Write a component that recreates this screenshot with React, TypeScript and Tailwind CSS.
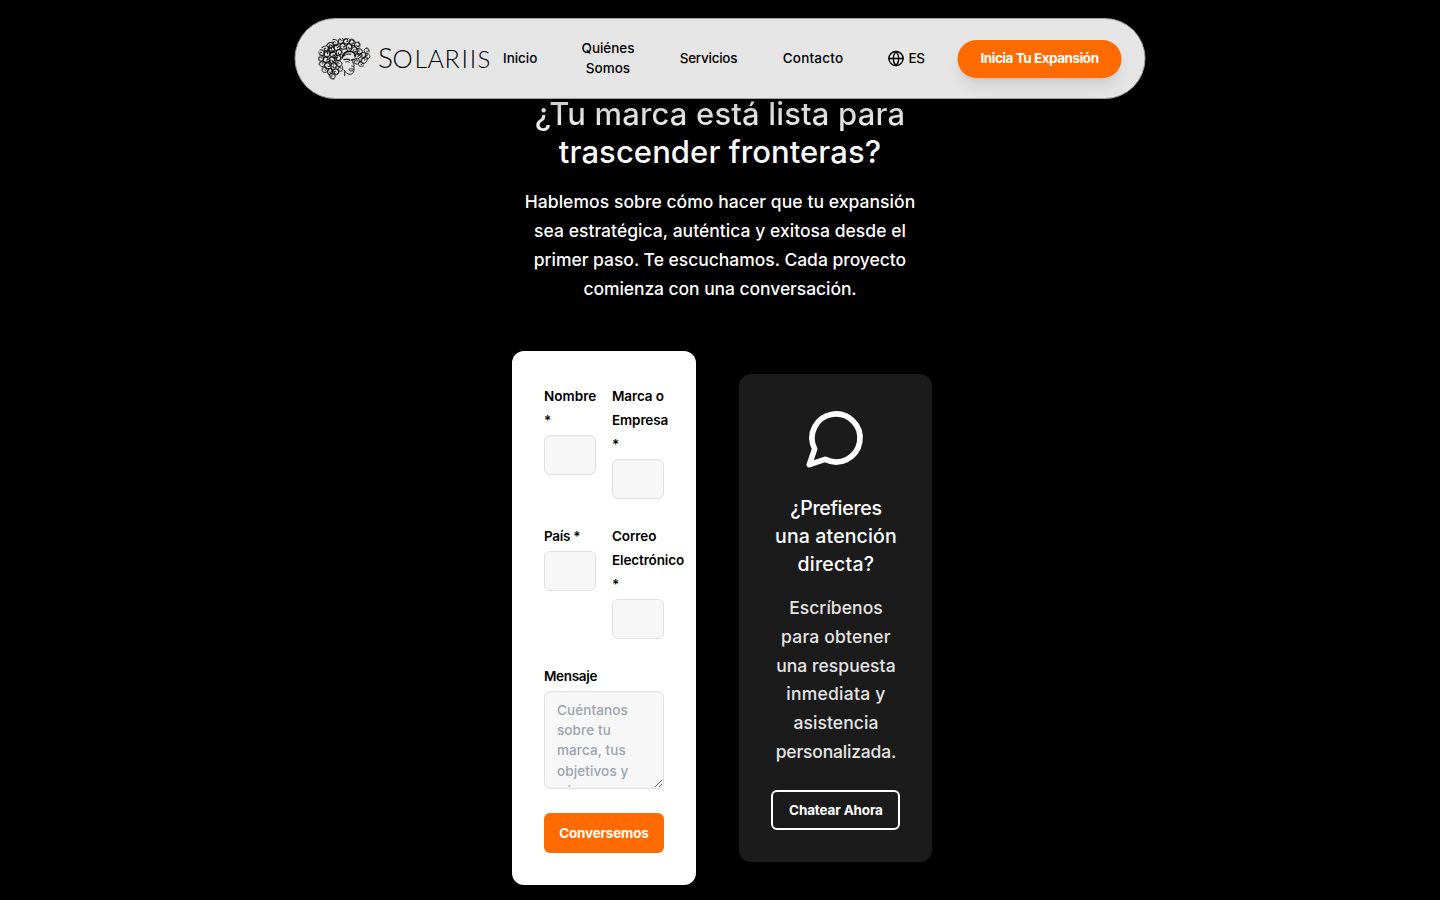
import type { ReactNode } from "react";

type LineProps = { children: ReactNode; className?: string };

function Line({ children, className = "" }: LineProps) {
  return <span className={`block whitespace-nowrap ${className}`}>{children}</span>;
}

const curls: [number, number, number, number][] = [
  [13, 7, 2.6, 20], [18, 4.5, 2.6, 80], [23.5, 3.2, 2.5, 140], [29, 3.4, 2.6, 200], [34.5, 4.6, 2.7, 250], [39.5, 7, 2.6, 300],
  [8.5, 10.5, 2.7, 40], [14, 11.5, 3, 110], [19.5, 9.5, 2.8, 190], [25.5, 8.4, 2.9, 230], [31.5, 9, 2.9, 310], [37, 11.5, 2.6, 10],
  [4.5, 15, 2.5, 90], [9.5, 16, 2.9, 160], [15.5, 16.5, 3, 250], [21.3, 14.5, 2.8, 320], [42, 13.5, 2.7, 60],
  [3.8, 20.5, 2.4, 130], [8.8, 21.8, 2.9, 210], [14.6, 22, 2.9, 280], [20.3, 20, 2.7, 30], [40, 18.5, 2.4, 200],
  [4.8, 26, 2.5, 180], [10.2, 27.6, 2.9, 250], [16, 27.8, 2.9, 320], [21.6, 25.6, 2.6, 90], [39.5, 23.5, 2.4, 140],
  [7.3, 32, 2.5, 220], [12.6, 33.6, 2.7, 300], [18.2, 33.6, 2.7, 30], [23, 31, 2.2, 150], [15, 38.2, 2.4, 60],
  [45.5, 17, 2.6, 20], [49, 12.8, 2.3, 280], [50.2, 18, 2.2, 90], [46.6, 22.6, 2.6, 170], [43.2, 26.2, 2.2, 240],
];

function Medusa() {
  return (
    <svg className="mt-px h-[42px] w-[54px] shrink-0" viewBox="0 0 54 42" fill="none" stroke="#0a0a0a" strokeLinecap="round">
      {curls.map(([x, y, r, a], i) => (
        <g key={i} transform={`translate(${x} ${y}) rotate(${a}) scale(${r / 3})`}>
          <path strokeWidth="1.05" d="M-4 2.2C-3.4-2.6 0-4 2-2.6 4.4-.7 2.8 2.8.2 2.6-1.6 2.4-1.6.4-.4 0" />
          <path strokeWidth="0.6" d="M-2.4 3.4C0 4.8 4.2 3.2 4.2-.6" />
        </g>
      ))}
      <path strokeWidth="1.7" d="M24.6 20c1.2-4.6 4-7 8.4-6.5 2.4.2 4.2 1.7 4.9 4.2" />
      <path strokeWidth="1" d="M26.5 18c2-1.8 4-2.4 6.8-1.8" />
      <path strokeWidth="1.3" d="M26.5 21.6c2.4-.8 4.2-.6 5.8.5M34 22c1-.7 2-.8 2.8-.6" />
      <path strokeWidth="0.9" d="M28.3 23.8c1.2-.5 2.4-.3 3.2.2M34.6 22.4c.5 2 1.6 3.6 2.1 5.2-.6.7-1.6.8-2.5.5M31.5 31.2c1.6-.6 3.1-.5 4.4-.1M32.2 32.7c1 .5 2 .5 3 0M36.4 28.6c.2 1.6.2 3 0 4.1-.5 2.2-1.9 3.7-4 3.6-2.6-.3-4.6-2-6-4.3M27 33.6c.2 1.7.5 3 .2 4.1" />
    </svg>
  );
}

function Logo() {
  return (
    <div className="flex w-[174px] shrink-0 items-center">
      <Medusa />
      <div className="mb-[3px] ml-[7px] flex h-[28px] items-baseline font-['Lato'] text-[25px] leading-[28px] font-light text-black">
        <span className="w-[14.5px] text-[28px]">S</span>
        <span className="w-[22px] text-[25.5px]">O</span>
        <span className="w-[13px]">L</span>
        <span className="w-[17px]">A</span>
        <span className="w-[17px]">R</span>
        <span className="w-[8.3px]">I</span>
        <span className="w-[7.7px]">I</span>
        <span className="w-[12px] text-[24px]">S</span>
      </div>
    </div>
  );
}

function Globe() {
  return (
    <svg className="size-[17px]" viewBox="0 0 24 24" fill="none" stroke="currentColor" strokeWidth="2" strokeLinecap="round" strokeLinejoin="round">
      <circle cx="12" cy="12" r="10" />
      <path d="M12 2a14.5 14.5 0 0 0 0 20 14.5 14.5 0 0 0 0-20M2 12h20" />
    </svg>
  );
}

function Header() {
  return (
    <header className="absolute top-[18px] left-1/2 z-10 flex h-[81px] w-[851px] -translate-x-1/2 items-center rounded-full border border-[#a3a3a3] bg-[#e5e5e5] pb-px pl-[21.5px] text-[13.5px] leading-5 font-[450] text-black shadow-2xl">
      <Logo />
      <nav className="ml-[12px] flex items-center text-center">
        <Line className="w-[34px] tracking-[-0.05px]">Inicio</Line>
        <div className="ml-[44.5px] w-[53px]">
          <Line className="tracking-[-0.05px]">Quiénes</Line>
          <Line>Somos</Line>
        </div>
        <Line className="ml-[45px] w-[58px] tracking-[-0.25px]">Servicios</Line>
        <Line className="ml-[45px] w-[61px] tracking-[0.2px]">Contacto</Line>
      </nav>
      <div className="ml-[44px] flex items-center gap-[4px]">
        <Globe />
        <Line className="w-[16px] tracking-[-0.5px]">ES</Line>
      </div>
      <button className="mt-px ml-[33px] h-[38px] w-[164px] rounded-full bg-[#ff6b00] pb-px font-bold whitespace-nowrap tracking-[-0.46px] text-white shadow-lg">
        Inicia Tu Expansión
      </button>
    </header>
  );
}

function Field({ children }: { children: ReactNode }) {
  return (
    <div>
      <label className="block pt-px">{children}</label>
      <input className="mt-[3px] block h-10 w-full rounded-md border border-[#e0e0e0] bg-[#f7f7f7]" />
    </div>
  );
}

function ContactForm() {
  return (
    <form className="h-[534px] w-[184px] rounded-xl bg-white p-8 text-[13.5px] leading-6 font-semibold text-black">
      <div className="grid grid-cols-2 gap-x-4 gap-y-6">
        <Field>
          <Line className="tracking-[0.05px]">Nombre</Line>
          <Line>*</Line>
        </Field>
        <Field>
          <Line className="tracking-[-0.1px]">Marca o</Line>
          <Line className="tracking-[-0.1px]">Empresa</Line>
          <Line>*</Line>
        </Field>
        <Field>
          <Line className="tracking-[-0.3px]">País *</Line>
        </Field>
        <Field>
          <Line className="tracking-[-0.08px]">Correo</Line>
          <Line className="tracking-[-0.12px]">Electrónico</Line>
          <Line>*</Line>
        </Field>
      </div>
      <label className="mt-6 block pt-px tracking-[-0.3px]">Mensaje</label>
      <textarea
        className="mt-[3px] block h-[98px] w-full resize overflow-hidden rounded-md border border-[#e0e0e0] bg-[#f7f7f7] px-3 py-2 text-[13.5px] leading-[20.2px] font-medium tracking-[0.12px] placeholder:text-[#9ca3af]"
        placeholder="Cuéntanos sobre tu marca, tus objetivos y cómo podemos ayudarte"
      />
      <button className="mt-6 block h-10 w-full rounded-md bg-[#ff6b00] text-[13.5px] font-bold tracking-[-0.2px] text-white">
        Conversemos
      </button>
    </form>
  );
}

function ChatCard() {
  return (
    <aside className="flex h-[488px] w-[193px] flex-col items-center rounded-xl bg-[#1b1b1b] p-8 text-center font-medium text-white">
      <svg className="size-16 shrink-0" viewBox="0 0 24 24" fill="none" stroke="currentColor" strokeWidth="2.1" strokeLinecap="round" strokeLinejoin="round">
        <path d="M7.9 20A9 9 0 1 0 4 16.1L2 22Z" />
      </svg>
      <h3 className="mt-6 text-[19.5px] leading-7">
        <Line className="tracking-[-0.3px]">¿Prefieres</Line>
        <Line className="tracking-[0.13px]">una atención</Line>
        <Line className="tracking-[0.25px]">directa?</Line>
      </h3>
      <p className="mt-4 text-[17.5px] leading-[28.8px] text-[#e5e5e5]">
        <Line className="tracking-[0.05px]">Escríbenos</Line>
        <Line className="tracking-[0.2px]">para obtener</Line>
        <Line className="tracking-[0.05px]">una respuesta</Line>
        <Line className="tracking-[0.23px]">inmediata y</Line>
        <Line className="tracking-[0.08px]">asistencia</Line>
        <Line className="tracking-[-0.18px]">personalizada.</Line>
      </p>
      <button className="mt-[23px] h-10 w-[129px] shrink-0 rounded-md border-2 border-white text-[13.5px] font-bold whitespace-nowrap tracking-[-0.15px]">
        Chatear Ahora
      </button>
    </aside>
  );
}

export default function App() {
  return (
    <div className="relative flex h-[900px] w-full flex-col items-center overflow-hidden bg-black font-['Inter',sans-serif] font-medium text-white">
      <Header />
      <h2 className="mt-[95px] text-center text-[31px] leading-[38.4px]">
        <Line className="bg-linear-to-b from-[#f4f4f4] to-white bg-clip-text tracking-[0.15px] text-transparent">¿Tu marca está lista para</Line>
        <Line className="tracking-[0.08px]">trascender fronteras?</Line>
      </h2>
      <p className="mt-[15.2px] text-center text-[17.5px] leading-[29px]">
        <Line className="tracking-[0.06px]">Hablemos sobre cómo hacer que tu expansión</Line>
        <Line className="tracking-[0.03px]">sea estratégica, auténtica y exitosa desde el</Line>
        <Line className="tracking-[-0.03px]">primer paso. Te escuchamos. Cada proyecto</Line>
        <Line className="tracking-[-0.07px]">comienza con una conversación.</Line>
      </p>
      <main className="mt-[48px] ml-[4.4px] flex items-center gap-[43.5px]">
        <ContactForm />
        <ChatCard />
      </main>
    </div>
  );
}
